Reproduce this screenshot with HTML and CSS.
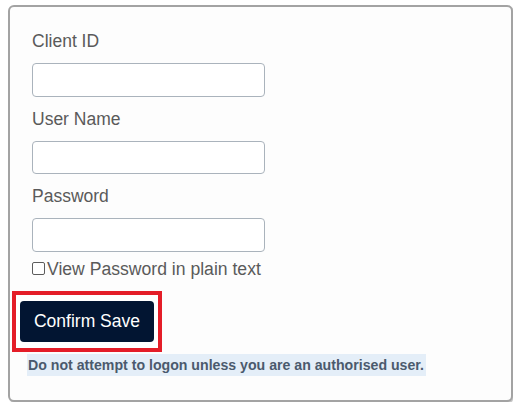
FILE: index.html
```html
<!DOCTYPE html>
<html lang="en">
<head>
	<meta charset="UTF-8">
	<title>Logon</title>
	<link rel="stylesheet" href="styles.css">
</head>
<body>
	<div class="panel">
		<label class="field-label" for="clientId">Client ID</label>
		<input class="field" id="clientId" type="text">
		<label class="field-label" for="userName">User Name</label>
		<input class="field" id="userName" type="text">
		<label class="field-label" for="password">Password</label>
		<input class="field field-last" id="password" type="password">
		<label class="plain"><input class="check" type="checkbox">View Password in plain text</label>
		<div class="confirm-wrap">
			<button class="btn-confirm" type="button">Confirm Save</button>
		</div>
		<p class="notice">Do not attempt to logon unless you are an authorised user.</p>
	</div>
</body>
</html>
```

FILE: styles.css
```css
*{
	margin: 0px;
	padding: 0px;
	box-sizing: border-box;
}
body{
	margin: 5px 10px 0 8px;
	background: #fff;
	font-family: "Liberation Sans", Arial, sans-serif;
}
.panel{
	width: 505px;
	height: 397px;
	border: 2px solid #a3a3a3;
	border-radius: 6px;
	box-shadow: 1px 1px 1px rgba(0,0,0,.25);
	background: #fdfdfd;
	padding: 22px 22px 24px 22px;
	display: flex;
	flex-direction: column;
	align-items: flex-start;
}
.field-label{
	display: block;
	font-size: 17.5px;
	line-height: 24px;
	color: #5a5a5a;
	margin-bottom: 10px;
}
.field{
	width: 233px;
	height: 34px;
	border: 1px solid #aab3bc;
	border-radius: 4px;
	background: #fff;
	margin-bottom: 10px;
	outline: none;
}
.field-last{
	margin-bottom: 5px;
}
.plain{
	display: flex;
	align-items: center;
	font-size: 17.6px;
	line-height: 24px;
	color: #5a5a5a;
}
.check{
	appearance: none;
	-webkit-appearance: none;
	width: 13px;
	height: 13px;
	border: 1px solid #5c5c5c;
	border-radius: 2px;
	background: #fff;
	margin: 0 2px 2px 0;
}
.confirm-wrap{
	margin: 10px 0 0 -20px;
	border: 4px solid #e41d28;
	padding: 6px 4px 6px 4px;
	background: #fff;
}
.btn-confirm{
	display: block;
	width: 134px;
	height: 41px;
	border: none;
	border-radius: 4px;
	background: #021532;
	color: #fff;
	font-family: "Liberation Sans", Arial, sans-serif;
	font-size: 17.5px;
	cursor: pointer;
}
.notice{
	margin: 2px 0 0 -5px;
	padding: 0 2px 0 1px;
	line-height: 22px;
	font-size: 14.15px;
	font-weight: bold;
	color: #4b5a6d;
	background: #e4eef8;
}
```
